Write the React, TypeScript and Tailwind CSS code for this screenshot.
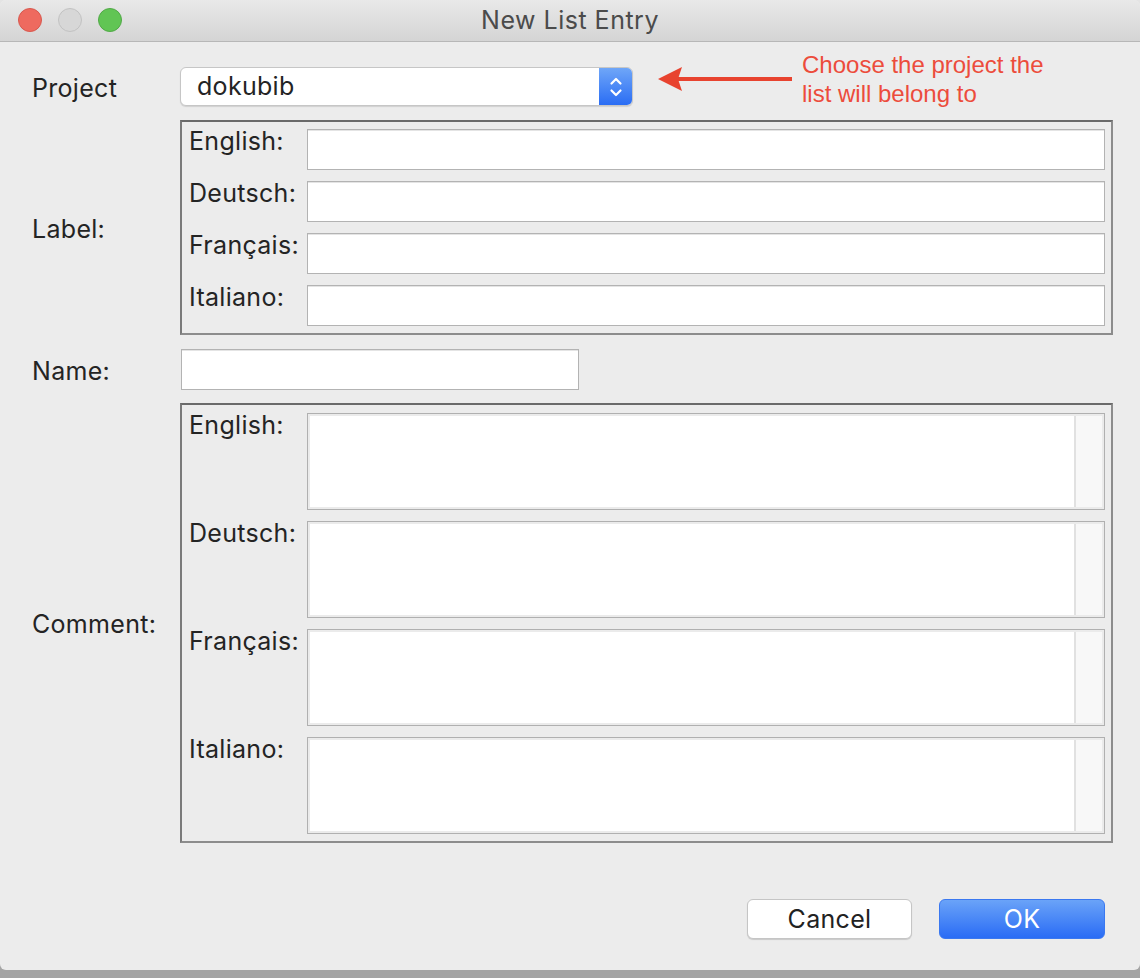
import React from "react";

const font = { fontFamily: "Inter, 'Liberation Sans', sans-serif" };

function Field({ w }: { w: string }) {
  return (
    <div className={`h-[41px] ${w} border border-[#b3b3b3] bg-white shadow-[inset_0_1px_0_#e4e4e4]`} />
  );
}

function Area() {
  return (
    <div className="h-[97px] w-[798px] border border-[#b0b0b0] bg-[#ebebeb] p-[2px] flex">
      <div className="flex-1 bg-white" />
      <div className="w-[28px] bg-[#f8f8f8] border-l-2 border-[#e1e1e1]" />
    </div>
  );
}

const langs = ["English:", "Deutsch:", "Français:", "Italiano:"];

export default function App() {
  return (
    <div
      className="w-[1140px] h-[978px] bg-[linear-gradient(to_bottom,#e4e4e4_0,#e4e4e4_900px,#a4a4a4_970px)] text-[#242424] tracking-[0.3px]"
      style={font}
    >
      <div className="h-[970px] bg-[#ececec] rounded-t-[6px] rounded-b-[6px] flex flex-col overflow-hidden">
        {/* Title bar */}
        <div className="h-[42px] shrink-0 border-b border-[#b7b7b7] bg-[linear-gradient(to_bottom,#e9e9e9,#d4d4d4)] relative flex items-center justify-center">
          <div className="absolute left-[18px] top-[8px] flex gap-[16px]">
            <div className="w-[24px] h-[24px] rounded-full bg-[#ee6a5f] border border-[#d8584e]" />
            <div className="w-[24px] h-[24px] rounded-full bg-[#d7d7d7] border border-[#c2c2c2]" />
            <div className="w-[24px] h-[24px] rounded-full bg-[#61c554] border border-[#51a947]" />
          </div>
          <span className="text-[25px] leading-none text-[#4b4b4b] tracking-[0.5px]">New List Entry</span>
        </div>

        {/* Content */}
        <div className="flex-1 flex flex-col pl-[32px] pt-[25px] text-[25px]">
          {/* Project row */}
          <div className="flex items-start h-[39px]">
            <div className="w-[148px] h-[39px] flex items-center pt-[5px]">Project</div>
            <div className="w-[453px] h-[39px] rounded-[6px] border border-[#c6c6c6] bg-white shadow-[0_1px_1px_rgba(0,0,0,0.12)] flex overflow-hidden">
              <div className="flex-1 flex items-center pl-[16px] pt-[1px]">dokubib</div>
              <div className="w-[33px] h-full bg-[linear-gradient(to_bottom,#6fa6f8,#2a6df4)] flex items-center justify-center">
                <svg width="14" height="24" viewBox="0 0 14 24" fill="none" stroke="white" strokeWidth="2.2" strokeLinecap="round" strokeLinejoin="round">
                  <path d="M2.5 8.5 L7 4 L11.5 8.5" />
                  <path d="M2.5 15.5 L7 20 L11.5 15.5" />
                </svg>
              </div>
            </div>
            <svg className="ml-[25px] -mt-[1px]" width="134" height="26" viewBox="0 0 134 26">
              <line x1="20" y1="13" x2="134" y2="13" stroke="#e8432f" strokeWidth="4" />
              <polygon points="0,13 24,1 20,13 24,25" fill="#e8432f" />
            </svg>
            <div
              className="ml-[10px] -mt-[17px] text-[24px] leading-[29px] text-[#ec4c3c] tracking-normal"
              style={{ fontFamily: "'Liberation Sans', Arial, sans-serif" }}
            >
              Choose the project the
              <br />
              list will belong to
            </div>
          </div>

          {/* Label group */}
          <div className="flex items-center mt-[14px]">
            <div className="w-[148px] pt-[4px]">Label:</div>
            <div className="w-[933px] border-2 border-[#8c8c8c] border-t-[#6a6a6a] border-l-[#7a7a7a] pt-[7px] pb-[7px] pl-[7px] flex flex-col gap-[11px]">
              {langs.map((l) => (
                <div key={l} className="flex items-start">
                  <div className="w-[118px] leading-[26px] -mt-[1px]">{l}</div>
                  <Field w="w-[798px]" />
                </div>
              ))}
            </div>
          </div>

          {/* Name */}
          <div className="flex items-center mt-[14px]">
            <div className="w-[149px] pt-[4px]">Name:</div>
            <Field w="w-[398px]" />
          </div>

          {/* Comment group */}
          <div className="flex items-center mt-[12px]">
            <div className="w-[148px] pt-[5px]">Comment:</div>
            <div className="w-[933px] border-2 border-[#8c8c8c] border-t-[#6a6a6a] border-l-[#7a7a7a] pt-[8px] pb-[7px] pl-[7px] flex flex-col gap-[11px]">
              {langs.map((l) => (
                <div key={l} className="flex items-start">
                  <div className="w-[118px] leading-[26px] -mt-[1px]">{l}</div>
                  <Area />
                </div>
              ))}
            </div>
          </div>

          {/* Buttons */}
          <div className="flex justify-end gap-[27px] pr-[35px] mt-[56px]">
            <button className="w-[165px] h-[40px] rounded-[6px] bg-white border border-[#c5c5c5] shadow-[0_1px_1px_rgba(0,0,0,0.15)] text-[#222] pt-[1px]">
              Cancel
            </button>
            <button className="w-[166px] h-[40px] rounded-[6px] bg-[linear-gradient(to_bottom,#6aa3f8,#2a6cf5)] border border-[#3a78f0] text-white pt-[1px]">
              OK
            </button>
          </div>
        </div>
      </div>
    </div>
  );
}
